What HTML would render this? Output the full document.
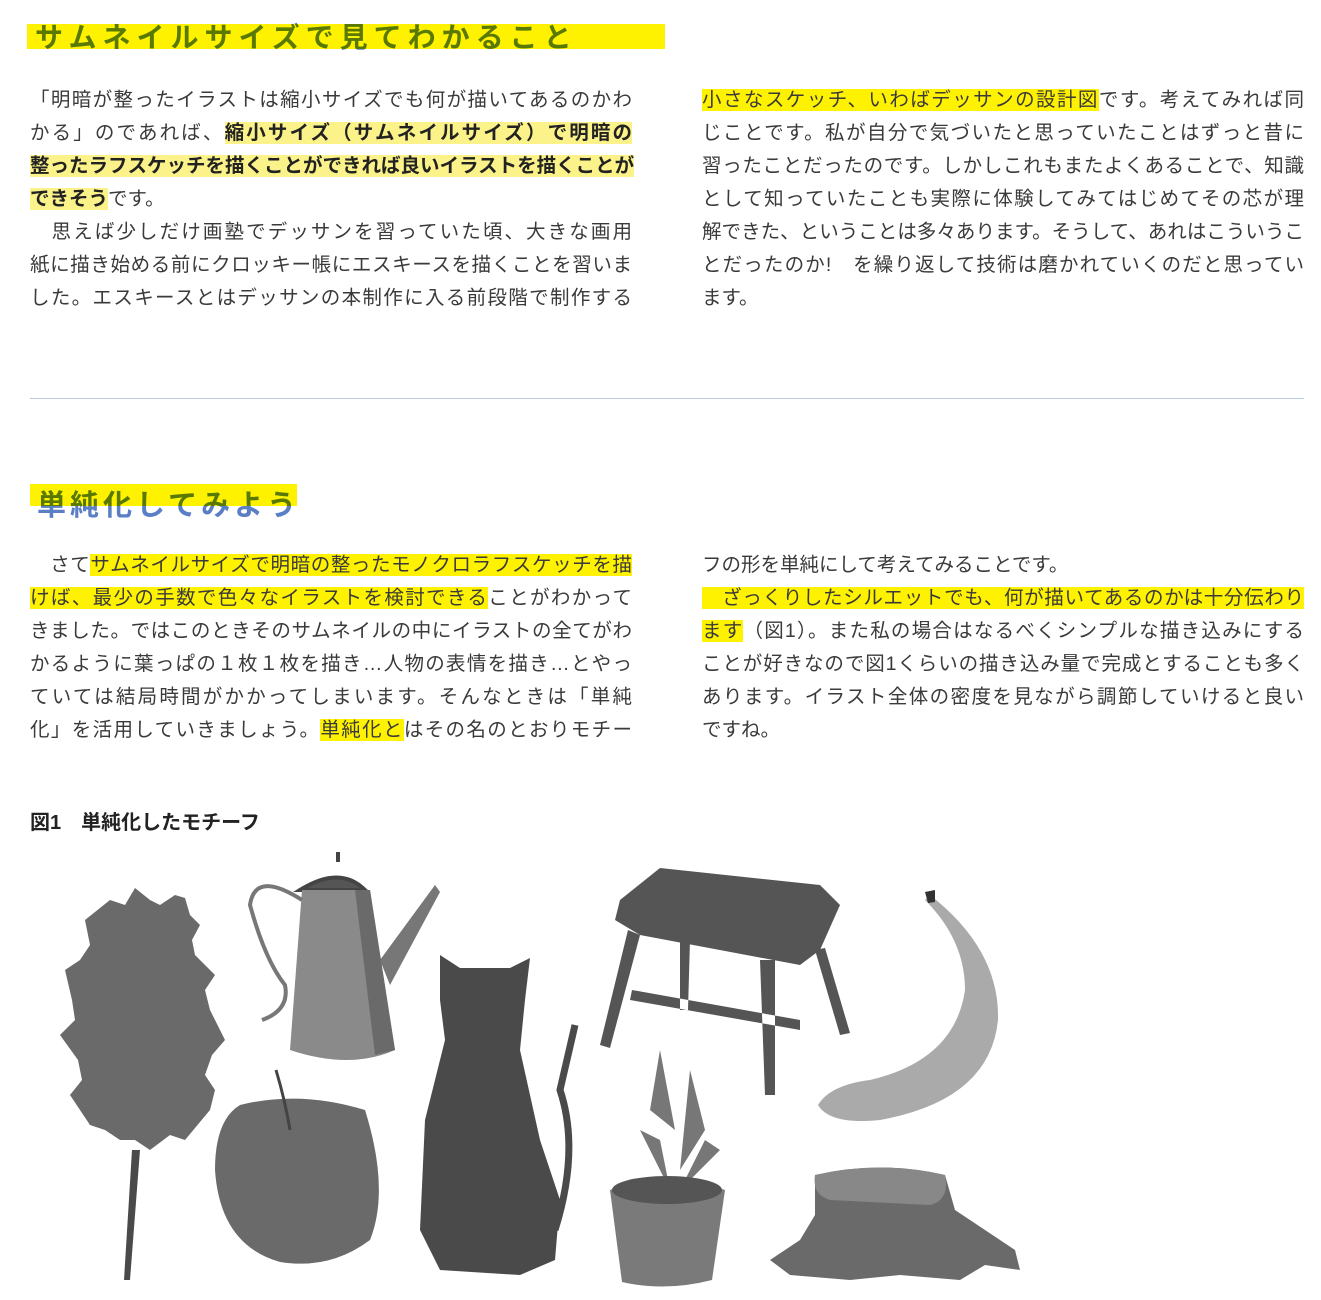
<!DOCTYPE html>
<html><head><meta charset="utf-8"><style>
*{margin:0;padding:0;box-sizing:border-box}
body{width:1321px;height:1300px;background:#fff;position:relative;overflow:hidden;font-family:"Liberation Sans","Noto Sans CJK JP",sans-serif;color:#3a3a3a}
.h{position:absolute;font-size:28px;color:#5a7fc4;letter-spacing:6px;white-space:nowrap;font-weight:bold}
.hl{position:absolute;background:#fff200;mix-blend-mode:multiply}
.col{position:absolute;width:602px;font-size:19.5px;line-height:33px}
.col div{text-align:justify;text-align-last:justify;white-space:nowrap;overflow:visible}
.col div.l{text-align-last:left}
.y{background:#fff200}
.p{background:#fbf38a;font-weight:bold;color:#222}
b{color:#222}
</style></head><body>
<div class="h" style="left:35px;top:16px">サムネイルサイズで見てわかること</div>
<div class="hl" style="left:27px;top:24px;width:638px;height:25px"></div>

<div class="col" style="left:30px;top:84px">
<div>「明暗が整ったイラストは縮小サイズでも何が描いてあるのかわ</div>
<div>かる」のであれば、<span class="p">縮小サイズ（サムネイルサイズ）で明暗の</span></div>
<div><span class="p">整ったラフスケッチを描くことができれば良いイラストを描くことが</span></div>
<div class="l"><span class="p">できそう</span>です。</div>
<div>　思えば少しだけ画塾でデッサンを習っていた頃、大きな画用</div>
<div>紙に描き始める前にクロッキー帳にエスキースを描くことを習いま</div>
<div>した。エスキースとはデッサンの本制作に入る前段階で制作する</div>
</div>
<div class="col" style="left:702px;top:84px">
<div><span class="y">小さなスケッチ、いわばデッサンの設計図</span>です。考えてみれば同</div>
<div>じことです。私が自分で気づいたと思っていたことはずっと昔に</div>
<div>習ったことだったのです。しかしこれもまたよくあることで、知識</div>
<div>として知っていたことも実際に体験してみてはじめてその芯が理</div>
<div>解できた、ということは多々あります。そうして、あれはこういうこ</div>
<div>とだったのか!　を繰り返して技術は磨かれていくのだと思ってい</div>
<div class="l">ます。</div>
</div>

<div style="position:absolute;left:30px;top:398px;width:1274px;height:1px;background:#b9c9e2"></div>

<div class="h" style="left:37px;top:482px;font-size:29px;letter-spacing:4px">単純化してみよう</div>
<div class="hl" style="left:30px;top:484px;width:267px;height:22px"></div>

<div class="col" style="left:30px;top:549px">
<div>　さて<span class="y">サムネイルサイズで明暗の整ったモノクロラフスケッチを描</span></div>
<div><span class="y">けば、</span><span class="y">最少の手数で色々なイラストを検討できる</span>ことがわかって</div>
<div>きました。ではこのときそのサムネイルの中にイラストの全てがわ</div>
<div>かるように葉っぱの１枚１枚を描き…人物の表情を描き…とやっ</div>
<div>ていては結局時間がかかってしまいます。そんなときは「単純</div>
<div>化」を活用していきましょう。<span class="y">単純化と</span>はその名のとおりモチー</div>
</div>
<div class="col" style="left:702px;top:549px">
<div class="l">フの形を単純にして考えてみることです。</div>
<div><span class="y">　ざっくりしたシルエットでも、何が描いてあるのかは十分伝わり</span></div>
<div><span class="y">ます</span>（図1）。また私の場合はなるべくシンプルな描き込みにする</div>
<div>ことが好きなので図1くらいの描き込み量で完成とすることも多く</div>
<div>あります。イラスト全体の密度を見ながら調節していけると良い</div>
<div class="l">ですね。</div>
</div>

<div style="position:absolute;left:30px;top:806px;font-size:20px;font-weight:bold;color:#222">図1　単純化したモチーフ</div>

<svg style="position:absolute;left:0;top:0" width="1321" height="1300">
<!-- tree -->
<path d="M110 900 L125 905 L135 888 L150 900 L160 905 L175 895 L185 898 L190 915 L200 925 L192 940 L195 955 L215 975 L205 990 L210 1010 L225 1040 L212 1055 L205 1075 L215 1090 L210 1110 L185 1140 L170 1135 L150 1150 L135 1140 L120 1140 L105 1130 L90 1125 L70 1095 L82 1080 L78 1060 L60 1035 L75 1020 L72 1000 L65 970 L80 960 L90 945 L85 920 Z" fill="#6a6a6a"/>
<path d="M132 1150 L124 1280 L130 1280 L140 1150 Z" fill="#4a4a4a"/>
<!-- kettle -->
<path d="M300 890 Q340 865 365 890 Z M338 852 v10" stroke="#444" stroke-width="4" fill="#555"/>
<path d="M302 890 L370 890 L395 1050 Q350 1070 290 1050 Z" fill="#8a8a8a"/>
<path d="M355 890 L370 890 L395 1050 L375 1055 Z" fill="#6a6a6a"/>
<path d="M380 960 L435 885 L440 892 L390 985 Z" fill="#777"/>
<path d="M302 900 Q255 870 250 905 Q265 960 285 985 Q290 1010 262 1020" stroke="#777" stroke-width="4" fill="none"/>
<!-- cat -->
<path d="M440 955 L460 968 L510 968 L530 958 L525 1000 L520 1050 L540 1140 L560 1200 L555 1260 L520 1275 L440 1270 L420 1230 L425 1120 L445 1040 L440 1000 Z" fill="#4a4a4a"/>
<path d="M555 1230 Q580 1150 560 1090 L575 1025" stroke="#4a4a4a" stroke-width="7" fill="none"/>
<!-- stool -->
<path d="M620 900 L660 868 L820 885 L840 905 L820 950 L800 965 L640 935 L615 920 Z" fill="#555"/>
<path d="M628 930 L600 1045 L610 1048 L640 935 Z M760 960 L765 1095 L775 1095 L775 960 Z M815 950 L840 1035 L850 1033 L825 948 Z M680 940 L680 1010 L688 1010 L690 940 Z M632 990 L800 1020 L800 1030 L630 1000 Z" fill="#555"/>
<!-- banana -->
<path d="M930 895 Q1000 950 998 1020 Q990 1100 880 1120 Q830 1125 818 1105 Q830 1085 870 1080 Q955 1060 965 990 Q965 940 925 900 Z" fill="#aaa"/>
<path d="M925 892 L935 890 L935 902 L928 903 Z" fill="#333"/>
<!-- apple -->
<path d="M240 1105 Q300 1090 365 1110 Q390 1190 370 1240 Q330 1270 280 1262 Q220 1245 215 1170 Q215 1120 240 1105 Z" fill="#6a6a6a"/>
<path d="M276 1070 Q285 1100 290 1130" stroke="#444" stroke-width="3" fill="none"/>
<!-- plant -->
<path d="M660 1050 L650 1110 L675 1130 Z M690 1070 L680 1170 L705 1130 Z M640 1130 L670 1190 L660 1140 Z M705 1140 L680 1190 L720 1150 Z" fill="#777"/>
<path d="M610 1190 Q665 1170 725 1190 L712 1280 Q665 1292 622 1282 Z" fill="#7a7a7a"/>
<ellipse cx="667" cy="1190" rx="55" ry="14" fill="#555"/>
<!-- stump -->
<path d="M815 1175 Q880 1160 945 1175 L955 1210 L1015 1250 L1020 1270 L985 1265 L960 1280 L900 1275 L850 1280 L790 1275 L770 1260 L800 1240 L815 1215 Z" fill="#6a6a6a"/>
<path d="M815 1175 Q880 1160 945 1175 Q950 1200 930 1205 L830 1200 Q812 1195 815 1175 Z" fill="#888"/>
</svg>
</body></html>
